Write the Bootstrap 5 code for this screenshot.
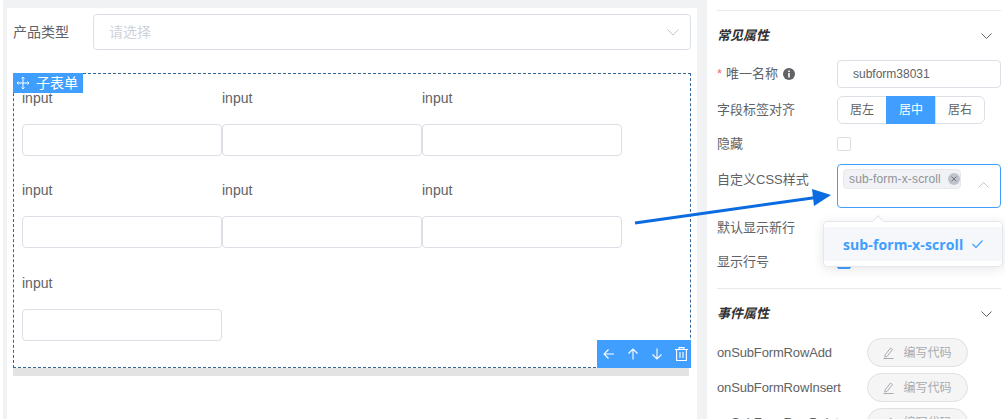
<!DOCTYPE html>
<html lang="zh">
<head>
<meta charset="UTF-8">
<title>子表单</title>
<link href="https://cdn.jsdelivr.net/npm/bootstrap@5.3.0/dist/css/bootstrap.min.css" rel="stylesheet">
<style>
    html, body { height: 419px; overflow: hidden; background: #fff; }
    body { font-family: "Liberation Sans", "Noto Sans CJK SC", sans-serif; font-size: 13px; color: #606266; position: relative; }
    .app-wrap { height: 419px; }

    /* left canvas */
    .stage { width: 694px; margin-left: 3px; padding: 8px 0 0 4px; background: #f1f2f4; flex: none; }
    .stage-panel { background: #fff; height: 411px; padding: 6px 6px 0; }
    .type-label { width: 80px; font-size: 14px; }
    .fake-select { height: 36px; border: 1px solid #dcdfe6; border-radius: 4px; padding: 0 11px 0 15px; color: #d0d3d9; font-size: 14px; }
    .subform-box { position: relative; height: 295px; margin-top: 23px; padding: 14px 0 0 8px; border: 1px dashed #336699; }
    .subform-tab { position: absolute; left: -1px; top: -1px; width: 70px; height: 20px; background: #409eff; color: #fff; font-size: 14px; padding-left: 4px; gap: 7px; line-height: 20px; }
    .field-row { height: 92px; }
    .field-row-wide { height: 93px; }
    .field-cell { width: 200px; }
    .field-name { height: 20px; line-height: 20px; margin-bottom: 16px; font-size: 14px; }
    .field-input { display: block; height: 32px; padding: 0 10px; border-color: #dcdfe6; border-radius: 4px; }
    .action-bar { position: absolute; right: -1px; bottom: -1px; width: 94px; height: 28px; background: #409eff; }
    .action-bar span { width: 24px; height: 28px; flex: none; }
    .h-scroll { height: 8px; width: 676px; background: #e3e3e3; }

    /* right settings */
    .side-gap { width: 10px; background: #f1f2f4; flex: none; }
    .side-panel { padding: 10px 4px 0 10px; flex: 1; min-width: 0; }
    .sect-line { border-top: 1px solid #e8e9ee; }
    .sect-line-low { margin-top: 9px; }
    .sect-title { height: 49px; font-weight: 700; font-style: italic; color: #303133; font-size: 13px; padding-right: 9px; }
    .prop-row { height: 28px; margin-bottom: 8px; }
    .prop-row-short { height: 24px; }
    .prop-name { width: 120px; flex: none; }
    .req-mark { color: #f56c6c; margin-right: 4px; }
    .info-dot { width: 12px; height: 12px; margin-left: 5px; }
    .name-input { height: 28px; width: 164px; padding: 0 15px; font-size: 12px; color: #606266; border-color: #dcdfe6; border-radius: 4px; }
    .align-group .btn { width: 50px; height: 28px; padding: 0; font-size: 12px; color: #606266; border-color: #dcdfe6; background: #fff; }
    .align-group .btn.picked { background: #409eff; border-color: #409eff; color: #fff; }
    .plain-check { width: 14px; height: 14px; border: 1px solid #dcdfe6; border-radius: 2px; }
    .plain-check.checked { background: #409eff; border-color: #409eff; }
    .css-row { height: 44px; margin-bottom: 3px; }
    .css-name { padding-top: 6px; align-self: flex-start; }
    .css-select { position: relative; width: 164px; height: 44px; border: 1px solid #409eff; border-radius: 4px; padding: 4px 5px; }
    .css-tag { height: 20px; width: 118px; background: #f0f2f5; border: 1px solid #e9e9eb; border-radius: 4px; padding: 0 0 0 5px; font-size: 12px; letter-spacing: .15px; color: #909399; white-space: nowrap; }
    .tag-x { width: 12px; height: 12px; border-radius: 50%; background: #c0c4cc; flex: none; }
    .up-arrow { position: absolute; right: 11px; top: 17px; }
    .low-row { height: 34px; }
    .code-row { height: 29px; margin-bottom: 6px; }
    .code-name { width: 150px; flex: none; letter-spacing: -.15px; }
    .code-btn { width: 101px; height: 29px; padding: 0; font-size: 12px; color: #a8abb2; background: #f5f5f5; border: 1px solid #e0e0e0; border-radius: 15px; gap: 9px; }

    /* overlays */
    .css-menu { position: absolute; left: 823px; top: 221px; width: 180px; height: 46px; background: #fff; border: 1px solid #e4e7ed; border-radius: 4px; box-shadow: 0 2px 12px rgba(0,0,0,.1); padding-top: 5px; z-index: 2; }
    .css-menu::before { content: ""; position: absolute; left: 50px; top: -5px; width: 8px; height: 8px; background: #fff; border-left: 1px solid #e4e7ed; border-top: 1px solid #e4e7ed; transform: rotate(45deg); }
    .menu-item { height: 34px; background: #f5f7fa; padding: 0 19px; color: #409eff; font-weight: 700; font-size: 14px; letter-spacing: .1px; font-family: "Open Sans", "Liberation Sans", sans-serif; }
    .arrow-layer { position: absolute; left: 0; top: 0; z-index: 3; pointer-events: none; }
</style>
</head>
<body>
<div class="app-wrap d-flex">
    <div class="stage">
        <div class="stage-panel">
            <div class="d-flex align-items-center">
                <div class="type-label">产品类型</div>
                <div class="fake-select flex-grow-1 d-flex align-items-center justify-content-between">
                    <span>请选择</span>
                    <svg width="12" height="7" viewBox="0 0 12 7" fill="none" stroke="#c0c4cc"><path d="M.5.5 6 6 11.5.5"/></svg>
                </div>
            </div>

            <div class="subform-box">
                <div class="subform-tab d-flex align-items-center">
                    <svg width="12" height="12" viewBox="0 0 12 12" fill="none" stroke="#fff" stroke-width="1"><path d="M6 0v12M0 6h12M4.5 1.5 6 0l1.500 1.500M4.500 10.500 6 12l1.500-1.500M1.500 4.500 0 6l1.500 1.500M10.500 4.500 12 6l-1.500 1.500"/></svg>
                    <span>子表单</span>
                </div>
                <div class="field-row d-flex">
                    <div class="field-cell"><div class="field-name">input</div><input class="form-control field-input" type="text"></div>
                    <div class="field-cell"><div class="field-name">input</div><input class="form-control field-input" type="text"></div>
                    <div class="field-cell"><div class="field-name">input</div><input class="form-control field-input" type="text"></div>
                </div>
                <div class="field-row field-row-wide d-flex">
                    <div class="field-cell"><div class="field-name">input</div><input class="form-control field-input" type="text"></div>
                    <div class="field-cell"><div class="field-name">input</div><input class="form-control field-input" type="text"></div>
                    <div class="field-cell"><div class="field-name">input</div><input class="form-control field-input" type="text"></div>
                </div>
                <div class="field-row d-flex">
                    <div class="field-cell"><div class="field-name">input</div><input class="form-control field-input" type="text"></div>
                </div>
                <div class="action-bar d-flex align-items-center">
                    <span class="d-flex align-items-center justify-content-center"><svg width="12" height="12" viewBox="0 0 12 12" fill="none" stroke="#fff" stroke-width="1.100"><path d="M11 6H1M5.500 1.500 1 6l4.500 4.500"/></svg></span>
                    <span class="d-flex align-items-center justify-content-center"><svg width="12" height="12" viewBox="0 0 12 12" fill="none" stroke="#fff" stroke-width="1.100"><path d="M6 11.500V1M1.500 5.500 6 1l4.500 4.500"/></svg></span>
                    <span class="d-flex align-items-center justify-content-center"><svg width="12" height="12" viewBox="0 0 12 12" fill="none" stroke="#fff" stroke-width="1.100"><path d="M6 .5V11M1.500 6.500 6 11l4.500-4.500"/></svg></span>
                    <span class="d-flex align-items-center justify-content-center"><svg width="13" height="14" viewBox="0 0 13 14" fill="none" stroke="#fff" stroke-width="1.100"><path d="M0 2.500h13M4 2.500V.6h5v1.900M1.600 2.500v11h9.800v-11M5 5v6M8 5v6"/></svg></span>
                </div>
            </div>
            <div class="h-scroll"></div>
        </div>
    </div>

    <div class="side-gap"></div>

    <div class="side-panel">
        <div class="sect-line"></div>
        <div class="sect-title d-flex align-items-center justify-content-between">
            <span>常见属性</span>
            <svg width="11" height="6" viewBox="0 0 11 6" fill="none" stroke="#606266"><path d="M.5.5 5.500 5.500 10.500.5"/></svg>
        </div>
        <div class="prop-row d-flex align-items-center">
            <div class="prop-name d-flex align-items-center">
                <span class="req-mark">*</span>唯一名称
                <svg class="info-dot" viewBox="0 0 12 12"><circle cx="6" cy="6" r="6" fill="#606266"/><rect x="5.200" y="5" width="1.600" height="4.500" fill="#fff"/><rect x="5.200" y="2.500" width="1.600" height="1.600" fill="#fff"/></svg>
            </div>
            <input class="form-control name-input" type="text" value="subform38031">
        </div>
        <div class="prop-row d-flex align-items-center">
            <div class="prop-name">字段标签对齐</div>
            <div class="btn-group align-group">
                <button type="button" class="btn">居左</button>
                <button type="button" class="btn picked">居中</button>
                <button type="button" class="btn">居右</button>
            </div>
        </div>
        <div class="prop-row prop-row-short d-flex align-items-center">
            <div class="prop-name">隐藏</div>
            <div class="plain-check"></div>
        </div>
        <div class="css-row d-flex">
            <div class="prop-name css-name">自定义CSS样式</div>
            <div class="css-select">
                <div class="css-tag d-flex align-items-center justify-content-between">
                    <span>sub-form-x-scroll</span>
                    <span class="tag-x d-flex align-items-center justify-content-center"><svg width="6" height="6" viewBox="0 0 6 6" stroke="#777" fill="none"><path d="m.5.5 5 5m0-5-5 5"/></svg></span>
                </div>
                <svg class="up-arrow" width="11" height="6" viewBox="0 0 11 6" fill="none" stroke="#c0c4cc"><path d="M.5 5.500 5.500.5l5 5"/></svg>
            </div>
        </div>
        <div class="low-row d-flex align-items-center"><div class="prop-name">默认显示新行</div></div>
        <div class="low-row d-flex align-items-center">
            <div class="prop-name">显示行号</div>
            <div class="plain-check checked"></div>
        </div>
        <div class="sect-line sect-line-low"></div>
        <div class="sect-title d-flex align-items-center justify-content-between">
            <span>事件属性</span>
            <svg width="11" height="6" viewBox="0 0 11 6" fill="none" stroke="#606266"><path d="M.5.5 5.500 5.500 10.500.5"/></svg>
        </div>
        <div class="code-row d-flex align-items-center">
            <div class="code-name">onSubFormRowAdd</div>
            <button type="button" class="btn code-btn d-flex align-items-center justify-content-center"><svg width="11" height="12" viewBox="0 0 11 12" fill="none" stroke="#a8abb2"><path d="M2 8 7.500 1 9.500 2.500 4 9.500 1.800 10zM.5 11.500h10"/></svg><span>编写代码</span></button>
        </div>
        <div class="code-row d-flex align-items-center">
            <div class="code-name">onSubFormRowInsert</div>
            <button type="button" class="btn code-btn d-flex align-items-center justify-content-center"><svg width="11" height="12" viewBox="0 0 11 12" fill="none" stroke="#a8abb2"><path d="M2 8 7.500 1 9.500 2.500 4 9.500 1.800 10zM.5 11.500h10"/></svg><span>编写代码</span></button>
        </div>
        <div class="code-row d-flex align-items-center">
            <div class="code-name">onSubFormRowDelete</div>
            <button type="button" class="btn code-btn d-flex align-items-center justify-content-center"><svg width="11" height="12" viewBox="0 0 11 12" fill="none" stroke="#a8abb2"><path d="M2 8 7.500 1 9.500 2.500 4 9.500 1.800 10zM.5 11.500h10"/></svg><span>编写代码</span></button>
        </div>
    </div>
</div>

<div class="css-menu">
    <div class="menu-item d-flex align-items-center justify-content-between">
        <span>sub-form-x-scroll</span>
        <svg width="11" height="8" viewBox="0 0 11 8" fill="none" stroke="#409eff" stroke-width="1.200"><path d="m.5 4 3.500 3.500 6.500-7"/></svg>
    </div>
</div>

<svg class="arrow-layer" width="1005" height="419" viewBox="0 0 1005 419">
    <path d="M635 223 816 197.500" stroke="#0a6ce0" stroke-width="3" fill="none"/>
    <path d="M812 189 831 195 814 206z" fill="#0a6ce0"/>
</svg>

<script src="https://cdn.jsdelivr.net/npm/bootstrap@5.3.0/dist/js/bootstrap.bundle.min.js"></script>
</body>
</html>
